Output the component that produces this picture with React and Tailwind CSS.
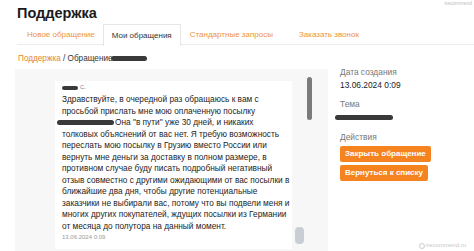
import React from "react";

const lines = [
  "Здравствуйте, в очередной раз обращаюсь к вам с",
  "просьбой прислать мне мою оплаченную посылку",
  null,
  "толковых объяснений от вас нет. Я требую возможность",
  "переслать мою посылку в Грузию вместо России или",
  "вернуть мне деньги за доставку в полном размере, в",
  "противном случае буду писать подробный негативный",
  "отзыв совместно с другими ожидающими от вас посылки в",
  "ближайшие два дня, чтобы другие потенциальные",
  "заказчики не выбирали вас, потому что вы подвели меня и",
  "многих других покупателей, ждущих посылки из Германии",
  "от месяца до полутора на данный момент.",
];

const Scribble = ({ className }) => (
  <span className={`inline-block rounded-full bg-[#3a3a3a] align-middle ${className}`} />
);

const tabs = [
  { label: "Новое обращение", extra: "pl-[10px] pr-[8px]" },
  { label: "Мои обращения", active: true },
  { label: "Стандартные запросы" },
  { label: "Заказать звонок", extra: "pl-[17px]" },
];

export default function App() {
  return (
    <div className="relative w-[474px] h-[251px] overflow-hidden bg-white text-[#222] font-['Liberation_Sans',Arial,sans-serif]">
      <div className="absolute right-[2px] top-0 text-[5px] leading-[6px] text-[#bbb]">irecommend</div>

      <h1 className="pl-[17px] pt-[3px] h-[24px] text-[14.5px] font-bold leading-[20px] text-[#1a1a1a]">Поддержка</h1>

      <div className="flex ml-[17px] h-[21px] border-b border-[#ececec] text-[8px] leading-[21px]">
        {tabs.map((tab) => (
          <div
            key={tab.label}
            className={
              tab.active
                ? "px-[8px] -mb-px h-[22px] bg-white border border-b-0 border-[#e6e6e6] text-[#333]"
                : `px-[9px] text-[#ec9440] ${tab.extra || ""}`
            }
          >
            {tab.label}
          </div>
        ))}
      </div>

      <div className="pl-[18px] pt-[3px] h-[24px] flex items-center text-[8.2px] leading-[12px]">
        <span className="text-[#e8862c]">Поддержка</span>
        <span className="text-[#333]">&nbsp;/ Обращение</span>
        <Scribble className="w-[36px] h-[5px] -ml-[2px]" />
      </div>

      <div className="flex h-[184px]">
        <div className="relative flex ml-[15px] w-[313px] bg-[#f7f7f7]">
          <div className="ml-[40px] mt-[12px] w-[237px] h-[168px] bg-white pl-[7px] pt-[2px] text-[8.3px] leading-[11.5px] font-medium text-[#242424]">
            <div className="flex items-center gap-[2px] h-[9px] text-[6px] text-[#888]">
              <Scribble className="w-[16px] h-[4px]" />
              <span>С.</span>
            </div>
            <div className="mt-[2px]">
              {lines.map((line, i) =>
                line === null ? (
                  <div key={i} className="whitespace-nowrap -ml-[5px]">
                    <Scribble className="w-[57px] h-[5px] mr-[1px]" />
                    Она "в пути" уже 30 дней, и никаких
                  </div>
                ) : (
                  <div key={i} className="whitespace-nowrap">{line}</div>
                )
              )}
            </div>
            <div className="mt-[1px] text-[6px] leading-[9px] text-[#999]">13.06.2024 0:09</div>
          </div>

          <div className="ml-[15px] mt-[8px] w-[5px] h-[43px] rounded-full bg-[#7b7b7b]" />

          <div className="absolute left-[280px] top-[158px] w-[9px] h-[17px] rounded-[4px] bg-[#c9ced4]" />
        </div>

        <div className="pl-[12px] -mt-[3px] text-[8.4px] leading-[13px]">
          <div className="text-[#777]">Дата создания</div>
          <div className="text-[#222]">13.06.2024 0:09</div>
          <div className="mt-[6px] text-[#777]">Тема</div>
          <Scribble className="w-[58px] h-[5px] -ml-[5px]" />
          <div className="mt-[7px] text-[#777]">Действия</div>
          <div className="mt-[2px] flex flex-col items-start gap-[3px]">
            <button className="h-[16px] px-[5px] rounded-[2px] bg-[#f5831f] text-white text-[8px] font-bold leading-[16px]">
              Закрыть обращение
            </button>
            <button className="h-[16px] px-[5px] rounded-[2px] bg-[#f5831f] text-white text-[8px] font-bold leading-[16px]">
              Вернуться к списку
            </button>
          </div>
        </div>
      </div>

      <div className="absolute right-[8px] bottom-[1px] flex items-center gap-[1px] text-[6px] text-[#c8c8c8]">
        <span className="inline-block w-[6px] h-[6px] rounded-full border border-[#ccc]" />
        irecommend.ru
      </div>
    </div>
  );
}
